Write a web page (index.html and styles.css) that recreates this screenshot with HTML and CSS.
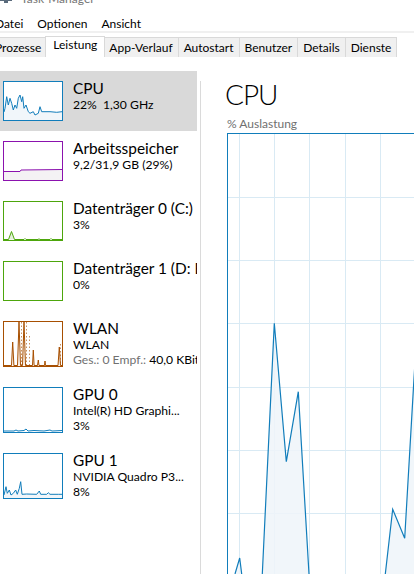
FILE: index.html
```html
<!DOCTYPE html>
<html lang="de">
<head>
<meta charset="utf-8">
<title>Task-Manager</title>
<link rel="stylesheet" href="styles.css">
</head>
<body>
<div class="titlebar">
  <svg class="appicon" width="12" height="10" viewBox="0 0 12 10">
    <rect x="0.5" y="-4.5" width="11" height="10" fill="#dfe9f2" stroke="#5a6b7c"/>
    <polyline points="2,3 4,0 6,2 8,-2 10,1" fill="none" stroke="#2f9a3a" stroke-width="1"/>
    <rect x="4" y="6" width="4" height="2" fill="#5a6b7c"/>
  </svg>
  <span class="title">Task-Manager</span>
</div>
<nav class="menu"><span>Datei</span><span>Optionen</span><span>Ansicht</span></nav>
<div class="sep"></div>
<div class="tabs">
  <div class="tab">Prozesse</div>
  <div class="tab active">Leistung</div>
  <div class="tab">App-Verlauf</div>
  <div class="tab">Autostart</div>
  <div class="tab">Benutzer</div>
  <div class="tab">Details</div>
  <div class="tab">Dienste</div>
</div>
<div class="main">
  <div class="list">
    <div class="item sel">
      <div class="thumb cpu">
        <svg width="58" height="38" viewBox="0 0 58 38">
          <polygon fill="#f1f6fa" points="0,30 1,26.3 2.7,14.7 4.3,23 6,16.3 7.7,21.3 9.3,28 11,23 12.7,26.3 14.3,16.3 16,13 17.7,19.7 18.7,14.7 20,26.3 22,23 24.3,29.7 26,31.3 29.3,29.7 31,33 34.3,31.3 36,24.7 37.7,29.7 41,29.7 46,29.7 52.7,30.3 58,29.7 58,38 0,38"/>
          <polyline fill="none" stroke="#117dbb" stroke-width="1" points="0,30 1,26.3 2.7,14.7 4.3,23 6,16.3 7.7,21.3 9.3,28 11,23 12.7,26.3 14.3,16.3 16,13 17.7,19.7 18.7,14.7 20,26.3 22,23 24.3,29.7 26,31.3 29.3,29.7 31,33 34.3,31.3 36,24.7 37.7,29.7 41,29.7 46,29.7 52.7,30.3 58,29.7"/>
        </svg>
      </div>
      <div class="info">
        <div class="name">CPU</div>
        <div class="sub">22%&nbsp; 1,30 GHz</div>
      </div>
    </div>
    <div class="item">
      <div class="thumb mem">
        <svg width="58" height="38" viewBox="0 0 58 38">
          <polygon fill="#f4f2f4" points="0,29.5 16,29.5 17,28 58,27.5 58,38 0,38"/>
          <polyline fill="none" stroke="#8b12ae" stroke-width="1" points="0,29.5 16,29.5 17,28 58,27.5"/>
        </svg>
      </div>
      <div class="info">
        <div class="name">Arbeitsspeicher</div>
        <div class="sub">9,2/31,9 GB (29%)</div>
      </div>
    </div>
    <div class="item">
      <div class="thumb disk">
        <svg width="58" height="38" viewBox="0 0 58 38">
          <polygon fill="#e4f1da" points="4.5,37.5 7.5,29.5 10.5,37.5"/>
          <polyline fill="none" stroke="#4da60c" stroke-width="1" points="0,37.5 4.5,37.5 7.5,29.5 10.5,37.5 20,37.5 21,36.5 22,37.5 34,37.5 35,36.8 36,37.5 46,37.5 47,36.5 48,37.5 58,37.5"/>
        </svg>
      </div>
      <div class="info">
        <div class="name">Datenträger 0 (C:)</div>
        <div class="sub">3%</div>
      </div>
    </div>
    <div class="item">
      <div class="thumb disk"></div>
      <div class="info">
        <div class="name">Datenträger 1 (D: Backup)</div>
        <div class="sub">0%</div>
      </div>
    </div>
    <div class="item tall">
      <div class="thumb net">
        <svg width="58" height="44" viewBox="0 0 58 44">
          <polygon fill="#fcf3eb" points="0,43.5 7.5,43.5 8.7,20 9.9,43.5 13.5,43.5 15,0 16.5,43.5 18.5,43.5 20,0 21.5,43.5 28.5,43.5 29.3,28 30.1,43.5 33.5,43.5 34.3,38 35,43.5 40.5,43.5 41,39 41.5,43.5 54,43.5 55.3,25 56.5,43.5 58,43.5"/>
          <g fill="none" stroke="#a74f01" stroke-width="1">
            <polyline points="0,43.5 7.5,43.5 8.7,20 9.9,43.5 13.5,43.5 15,0 16.5,43.5 18.5,43.5 20,0 21.5,43.5 28.5,43.5 29.3,28 30.1,43.5 33.5,43.5 34.3,38 35,43.5 40.5,43.5 41,39 41.5,43.5 54,43.5 55.3,25 56.5,43.5 58,43.5"/>
            <g stroke-dasharray="1.5 2" stroke-width="0.8" stroke-opacity="0.8">
              <line x1="17.5" y1="0" x2="17.5" y2="43"/>
              <line x1="22.5" y1="0" x2="22.5" y2="43"/>
              <line x1="25.5" y1="14" x2="25.5" y2="43"/>
              <line x1="56.5" y1="22" x2="56.5" y2="43"/>
            </g>
          </g>
        </svg>
      </div>
      <div class="info">
        <div class="name">WLAN</div>
        <div class="sub">WLAN</div>
        <div class="sub"><span class="muted">Ges.: 0 Empf.:</span> 40,0 KBit/s</div>
      </div>
    </div>
    <div class="item tall">
      <div class="thumb gpu">
        <svg width="58" height="44" viewBox="0 0 58 44">
          <polyline fill="none" stroke="#117dbb" stroke-width="1" points="0,43 10,43 12,42 14,43 20,42.5 22,41 24,43 30,42.5 40,43 46,42 48,43 58,42.5"/>
        </svg>
      </div>
      <div class="info">
        <div class="name">GPU 0</div>
        <div class="sub">Intel(R) HD Graphi...</div>
        <div class="sub">3%</div>
      </div>
    </div>
    <div class="item tall">
      <div class="thumb gpu">
        <svg width="58" height="44" viewBox="0 0 58 44">
          <polygon fill="#f1f6fa" points="0,41 2,32.7 3.3,39.3 5.3,36 7,41 9.3,39.3 11.7,36 13.3,40.3 15.3,34.3 16.7,27.7 18,40.3 22.7,40 32.7,40.3 35.3,37 36.7,40.3 42.7,40.3 44.3,38.7 46,40.3 54.3,40.3 58,40.3 58,44 0,44"/>
          <polyline fill="none" stroke="#117dbb" stroke-width="1" points="0,41 2,32.7 3.3,39.3 5.3,36 7,41 9.3,39.3 11.7,36 13.3,40.3 15.3,34.3 16.7,27.7 18,40.3 22.7,40 32.7,40.3 35.3,37 36.7,40.3 42.7,40.3 44.3,38.7 46,40.3 54.3,40.3 58,40.3"/>
        </svg>
      </div>
      <div class="info">
        <div class="name">GPU 1</div>
        <div class="sub">NVIDIA Quadro P3...</div>
        <div class="sub">8%</div>
      </div>
    </div>
  </div>
  <div class="vline"></div>
  <div class="detail">
    <h1 class="heading">CPU</h1>
    <div class="caption">% Auslastung</div>
    <div class="graph">
      <svg width="358" height="635" viewBox="0 0 358 635">
        <g stroke="#d9eaf4" stroke-width="1">
          <line x1="11.5" y1="0" x2="11.5" y2="635"/>
          <line x1="46.5" y1="0" x2="46.5" y2="635"/>
          <line x1="81.5" y1="0" x2="81.5" y2="635"/>
          <line x1="117.5" y1="0" x2="117.5" y2="635"/>
          <line x1="152.5" y1="0" x2="152.5" y2="635"/>
          <line x1="187.5" y1="0" x2="187.5" y2="635"/>
          <line x1="222.5" y1="0" x2="222.5" y2="635"/>
          <line x1="0" y1="63.5" x2="358" y2="63.5"/>
          <line x1="0" y1="126.5" x2="358" y2="126.5"/>
          <line x1="0" y1="189.5" x2="358" y2="189.5"/>
          <line x1="0" y1="253.5" x2="358" y2="253.5"/>
          <line x1="0" y1="316.5" x2="358" y2="316.5"/>
          <line x1="0" y1="379.5" x2="358" y2="379.5"/>
          <line x1="0" y1="443.5" x2="358" y2="443.5"/>
          <line x1="0" y1="506.5" x2="358" y2="506.5"/>
          <line x1="0" y1="570.5" x2="358" y2="570.5"/>
        </g>
        <polygon fill="#eef4f9" fill-opacity="0.85" points="0,460 7,440 11.7,424 13.7,440 17,466 33,466 34.3,440 46.3,189.3 58.3,327.7 70.3,257.7 81,440 82.5,466 154.3,466 157.3,440 164.7,375.3 176.7,404.3 186,244.3 190,180 200,300 210,466 210,635 0,635"/>
        <polyline fill="none" stroke="#117dbb" stroke-width="1.2" points="0,460 7,440 11.7,424 13.7,440 17,466 33,466 34.3,440 46.3,189.3 58.3,327.7 70.3,257.7 81,440 82.5,466 154.3,466 157.3,440 164.7,375.3 176.7,404.3 186,244.3 190,180 200,300 210,466"/>
      </svg>
    </div>
  </div>
</div>
</body>
</html>
```

FILE: styles.css
```css
* {
  box-sizing: border-box;
  margin: 0;
  padding: 0;
}

html,
body {
  width: 414px;
  height: 574px;
  overflow: hidden;
  background: #fff;
}

body {
  font-family: "Segoe UI", Lato, "Noto Sans", sans-serif;
  font-size: 12px;
  color: #000;
}

.titlebar {
  height: 8px;
  overflow: hidden;
  display: flex;
  align-items: flex-end;
  gap: 9px;
}

.appicon {
  display: block;
  flex: none;
  margin-bottom: 3px;
}

.title {
  line-height: 12px;
  margin-bottom: 3px;
  color: #767676;
  white-space: nowrap;
}

.menu {
  display: flex;
  height: 23px;
  margin-left: -5px;
  gap: 14px;
}

.menu span {
  line-height: 16px;
  padding-top: 8px;
}

.sep {
  height: 2px;
  background: #f0f0f0;
}

.tabs {
  display: flex;
  align-items: flex-end;
  height: 24px;
  margin-left: -11px;
}

.tab {
  height: 20px;
  padding: 2px 5px 0;
  line-height: 15px;
  background: #f0f0f0;
  border: 1px solid #d9d9d9;
  border-bottom: 0;
  margin-right: -1px;
  white-space: nowrap;
}

.tab.active {
  height: 21px;
  padding: 0 7px;
  background: #fff;
  margin-left: -1px;
  margin-right: -2px;
  z-index: 1;
}

.main {
  display: flex;
  height: 517px;
}

.list {
  width: 197px;
  flex: none;
  padding-top: 14px;
}

.item {
  display: flex;
  gap: 10px;
  height: 60px;
  padding: 10px 0 0 3px;
}

.item.tall {
  height: 66px;
}

.item.sel {
  background: #d9d9d9;
}

.thumb {
  width: 60px;
  height: 40px;
  border: 1px solid;
  flex: none;
  background: #fff;
}

.tall .thumb {
  height: 46px;
}

.thumb svg {
  display: block;
}

.cpu,
.gpu {
  border-color: #117dbb;
}

.mem {
  border-color: #8b12ae;
}

.disk {
  border-color: #4da60c;
}

.net {
  border-color: #a74f01;
}

.info {
  flex: 1;
  min-width: 0;
  overflow: hidden;
  white-space: nowrap;
  margin-top: -2px;
}

.name {
  font-size: 15.4px;
  line-height: 18px;
}

.sub {
  font-size: 12.15px;
  line-height: 15px;
}

.muted {
  color: #707070;
}

.vline {
  width: 1px;
  flex: none;
  background: #dadada;
  margin: 24px 0 0 3px;
}

.detail {
  flex: 1;
  min-width: 0;
  padding: 20px 0 0 26px;
}

.heading {
  font-size: 28px;
  font-weight: 300;
  letter-spacing: -1px;
  line-height: 34px;
  margin-left: -2px;
}

.caption {
  color: #707070;
  line-height: 15px;
  margin-top: 5px;
}

.graph {
  width: 360px;
  height: 637px;
  border: 1px solid #117dbb;
  margin-top: 2px;
}

.graph svg {
  display: block;
}
```
